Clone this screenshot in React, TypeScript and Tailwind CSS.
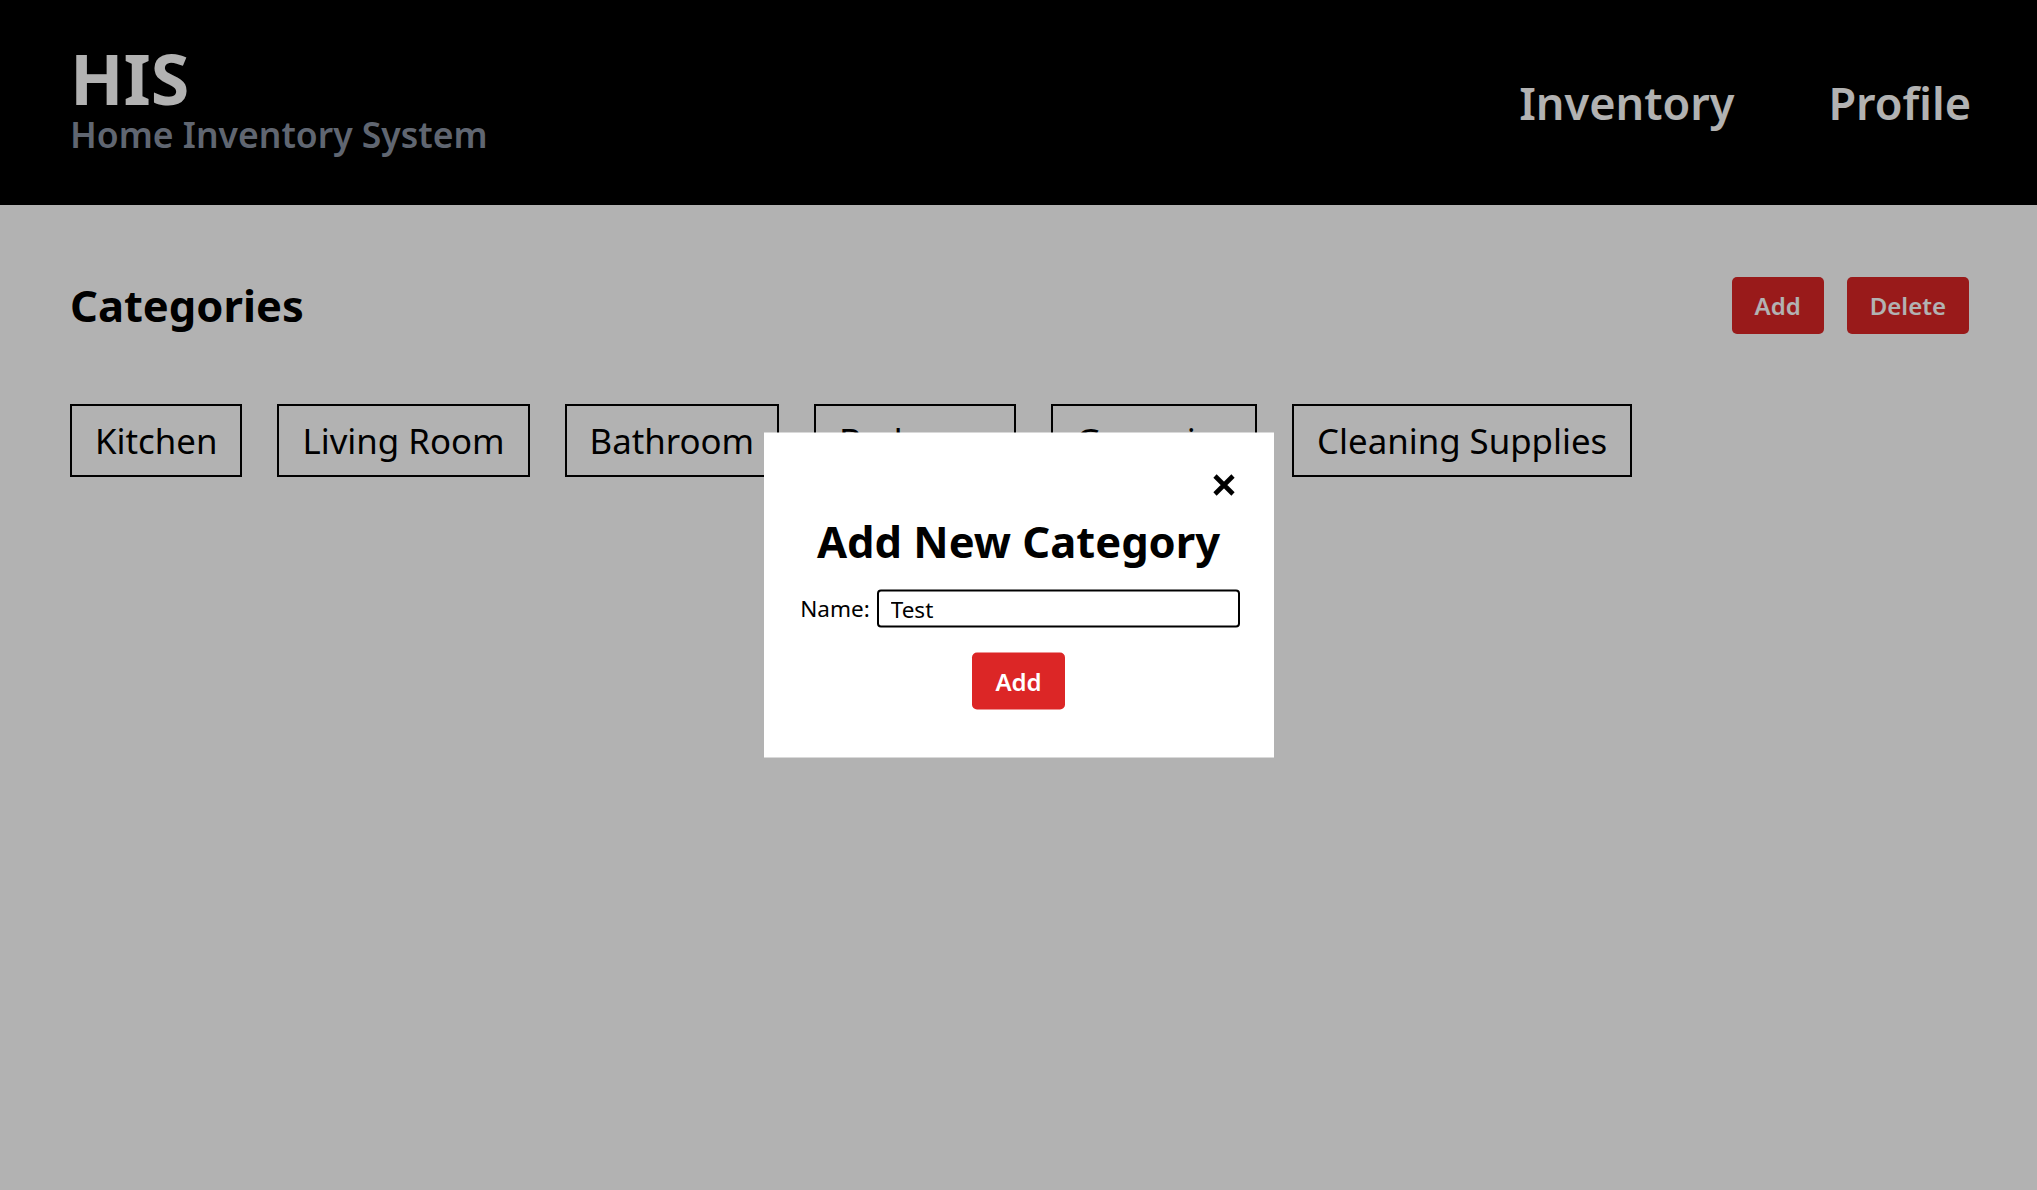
import { useState } from 'react';

const categories = ['Kitchen', 'Living Room', 'Bathroom', 'Bedroom', 'Groceries', 'Cleaning Supplies'];

function CloseIcon() {
  return (
    <svg width="24" height="23" viewBox="0 0 24 23" className="block">
      <path d="M3 2.5 L21 20.5 M21 2.5 L3 20.5" stroke="#000" strokeWidth="4.6" strokeLinecap="butt" fill="none" />
    </svg>
  );
}

export default function App() {
  const [name, setName] = useState('Test');

  return (
    <div className="min-h-screen bg-white font-['Noto_Sans',sans-serif] text-black">
      <header className="flex h-[205px] items-center justify-between bg-black pl-[70px] pr-[66px]">
        <div className="flex flex-col pb-3">
          <h1 className="text-[70px] font-bold leading-[72px] text-white">HIS</h1>
          <p className="mt-[3px] text-[35.5px] font-semibold leading-[35px] text-[#8a93a3]">Home Inventory System</p>
        </div>
        <nav className="flex items-center gap-[94px] text-[45px] font-semibold leading-[45px] text-white">
          <a href="#">Inventory</a>
          <a href="#">Profile</a>
        </nav>
      </header>

      <main className="pl-[70px] pr-[68px] pt-[72px]">
        <div className="flex items-center justify-between">
          <h2 className="text-[43.5px] font-bold leading-[53px]">Categories</h2>
          <div className="flex gap-[23px]">
            <button className="rounded-[5px] bg-[#dc2626] px-[23px] py-3 text-[24px] font-semibold leading-[33px] text-white">Add</button>
            <button className="rounded-[5px] bg-[#dc2626] px-[23px] py-3 text-[24px] font-semibold leading-[33px] text-white">Delete</button>
          </div>
        </div>

        <div className="mt-[70px] flex flex-wrap gap-[35px]">
          {categories.map((c) => (
            <div key={c} className="border-2 border-black px-[23px] py-2 text-[34.8px] leading-[53px]">
              {c}
            </div>
          ))}
        </div>
      </main>

      <div className="fixed inset-0 bg-black/30" />

      <div className="fixed left-1/2 top-1/2 flex w-[510px] -translate-x-1/2 -translate-y-1/2 flex-col items-center bg-white pb-[48px] pt-[41px]">
        <button className="mr-[38px] self-end">
          <CloseIcon />
        </button>
        <h2 className="mt-[18px] text-[43.5px] font-bold leading-[53px]">Add New Category</h2>
        <div className="mt-[22px] flex items-center gap-[7px] pl-[3px]">
          <label className="text-[22.5px] leading-[30px]">Name:</label>
          <input
            autoFocus
            value={name}
            onChange={(e) => setName(e.target.value)}
            className="h-[38px] w-[363px] rounded-[4px] border-2 border-black pl-[12px] text-[22.5px] outline-none"
          />
        </div>
        <button className="mt-[25px] rounded-[5px] bg-[#dc2626] px-[23px] py-3 text-[24px] font-semibold leading-[33px] text-white">Add</button>
      </div>
    </div>
  );
}
